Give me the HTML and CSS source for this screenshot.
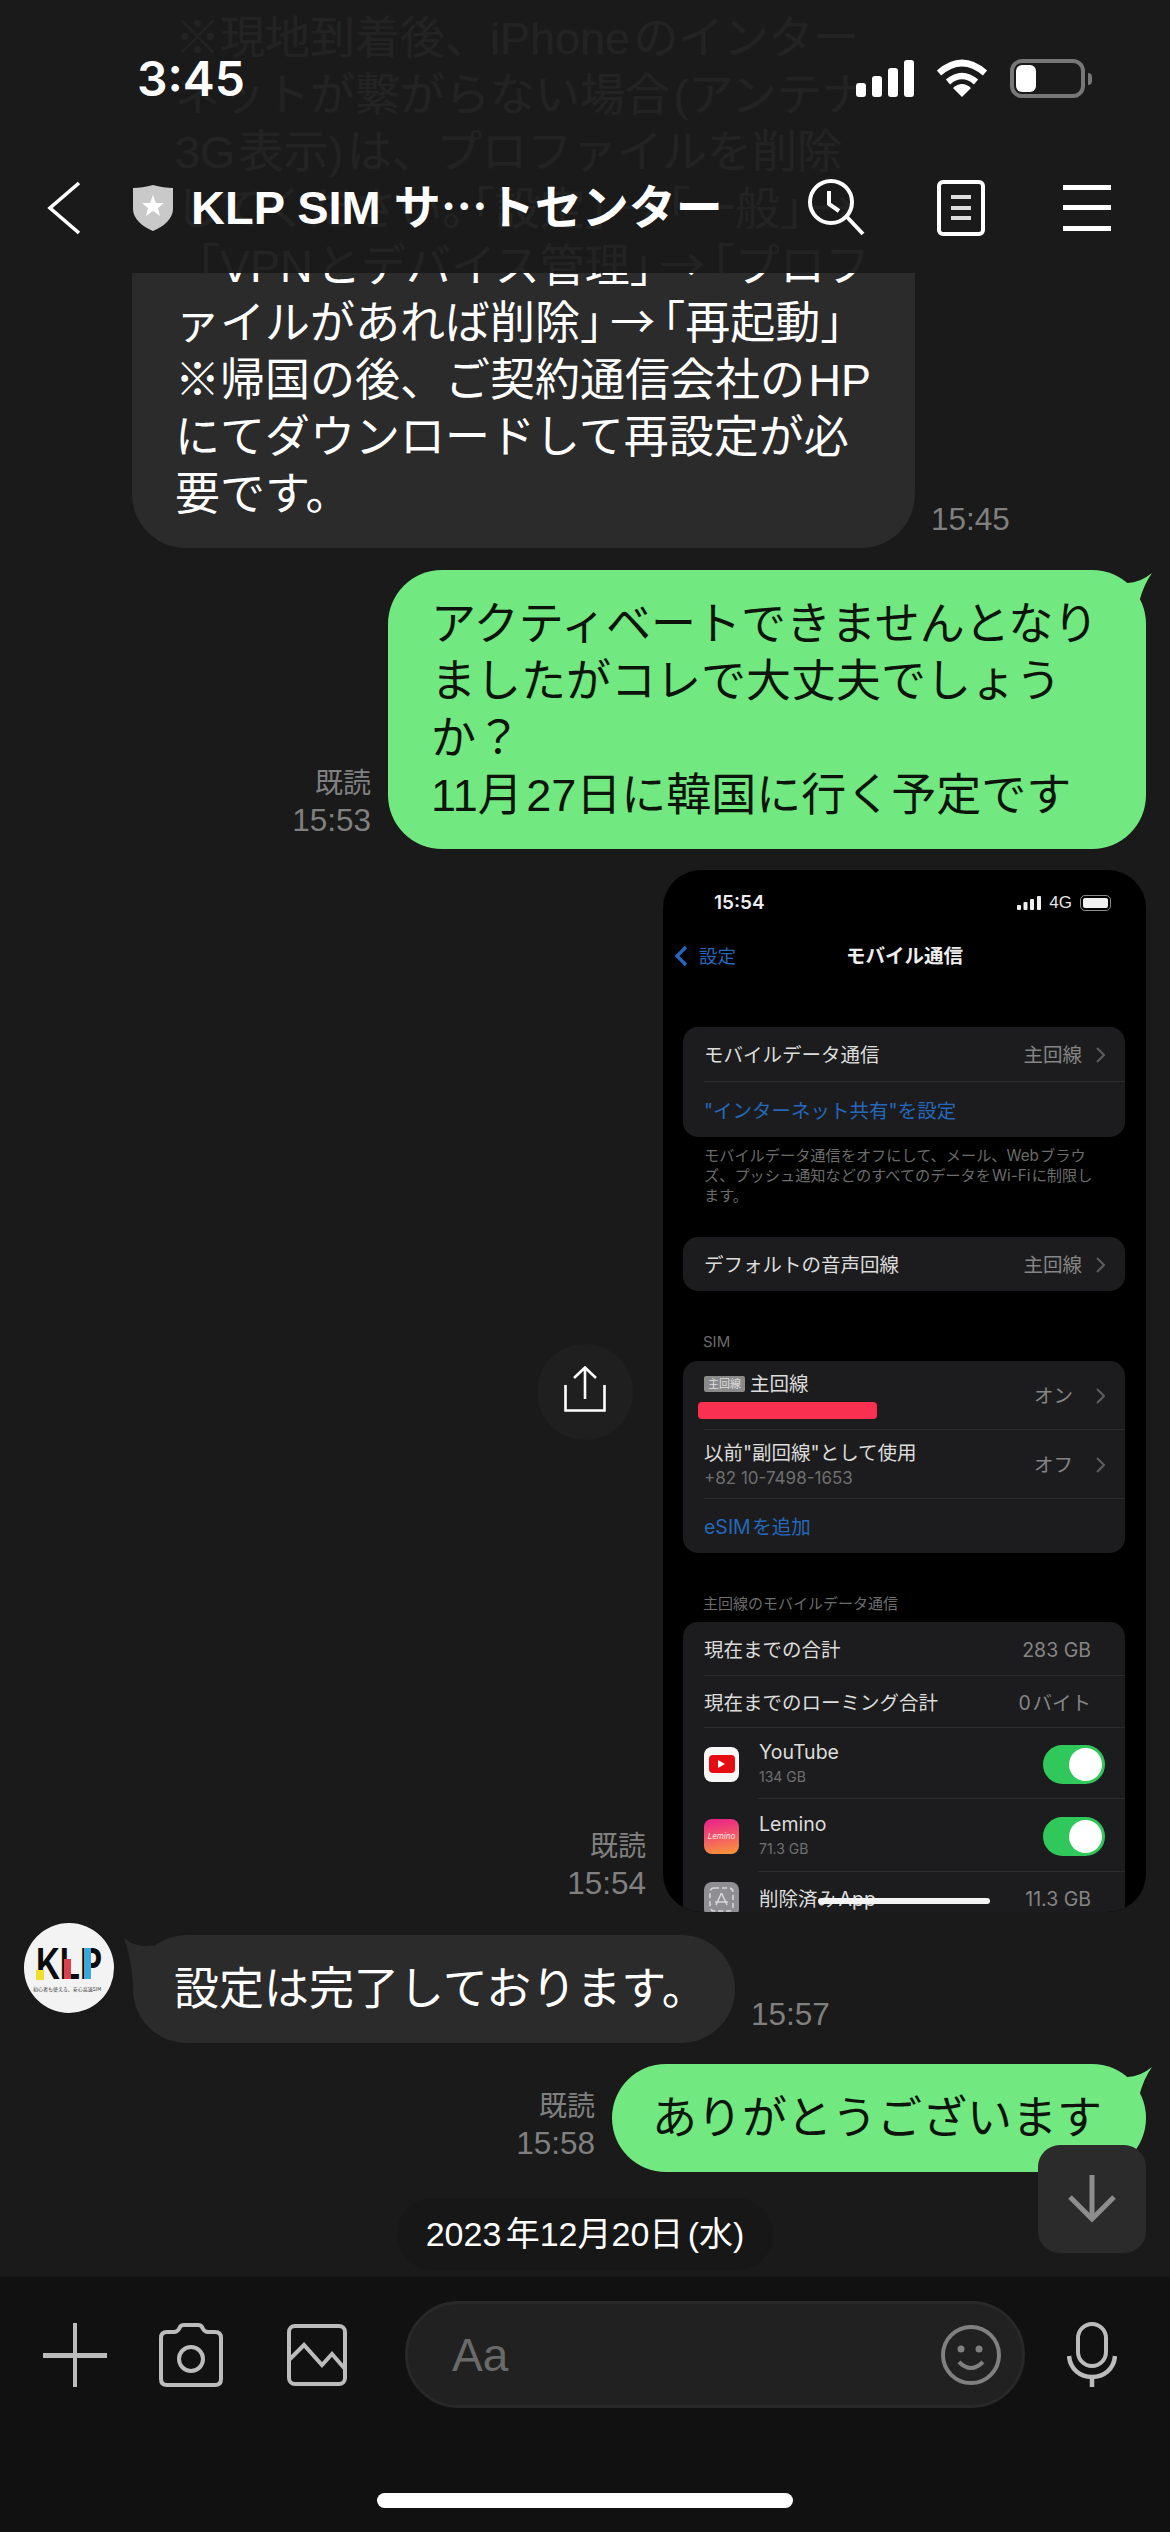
FILE: index.html
```html
<!DOCTYPE html>
<html lang="ja">
<head>
    <meta charset="utf-8">
    <title>KLP SIM サポートセンター</title>
    <link rel="stylesheet" href="styles.css">
</head>
<body>
    <div class="app">
        <header class="header">
            <div class="status">
                <span class="clock">3:45</span>
                <div class="status-icons">
                    <svg width="58" height="37" viewBox="0 0 58 37" fill="#fff">
                        <rect x="0" y="23" width="10" height="14" rx="3"/>
                        <rect x="16" y="16" width="10" height="21" rx="3"/>
                        <rect x="32" y="8" width="10" height="29" rx="3"/>
                        <rect x="48" y="0" width="10" height="37" rx="3"/>
                    </svg>
                    <svg width="52" height="38" viewBox="0 0 52 38">
                        <path d="M3 14Q26 -6 49 14" fill="none" stroke="#fff" stroke-width="6.5"/>
                        <path d="M12 23Q26 11 40 23" fill="none" stroke="#fff" stroke-width="6.5"/>
                        <path d="M26 38L17 29Q26 21 35 29Z" fill="#fff"/>
                    </svg>
                    <div class="battery"><div class="battery-fill"></div></div>
                </div>
            </div>
            <nav class="nav">
                <svg class="nav-back" width="36" height="56" viewBox="0 0 36 56">
                    <path d="M32 3L3 28L32 53" fill="none" stroke="#fff" stroke-width="3.6"/>
                </svg>
                <svg class="nav-shield" width="40" height="46" viewBox="0 0 40 46">
                    <path d="M20 0C27 2 34 3 40 3V24C40 34 30 42 20 46C10 42 0 34 0 24V3C6 3 13 2 20 0Z" fill="#c9c9c9"/>
                    <path d="M20 10L23 18L31 18L25 23L27 31L20 26L13 31L15 23L9 18L17 18Z" fill="#fff"/>
                </svg>
                <h1 class="title">KLP SIM サ<span class="dots">…</span>トセンター</h1>
                <div class="nav-icons">
                    <svg width="60" height="60" viewBox="0 0 60 60" fill="none" stroke="#fff" stroke-width="4">
                        <circle cx="25" cy="24" r="21"/>
                        <path d="M41 39L57 56"/>
                        <path d="M23 13V26L33 33"/>
                    </svg>
                    <svg width="48" height="56" viewBox="0 0 48 56" fill="none" stroke="#fff" stroke-width="4">
                        <rect x="2" y="2" width="44" height="52" rx="4"/>
                        <path d="M14 17H34M14 28H34M14 38H34" stroke="#ddd"/>
                    </svg>
                    <svg class="nav-menu" width="48" height="46" viewBox="0 0 48 46" fill="#fff">
                        <rect y="0" width="48" height="5"/>
                        <rect y="20" width="48" height="5"/>
                        <rect y="41" width="48" height="5"/>
                    </svg>
                </div>
            </nav>
        </header>

        <main class="chat">
            <div class="row row-in row-top">
                <div class="bubble bubble-in bubble-w783">※現地到着後、iPhone のインター<br>ネットが繋がらない場合 (アンテナ<br>3G 表示) は、プロファイルを削除<br>してください<span class="squeeze">。</span>「設定<span class="squeeze">」→</span>「一般<span class="squeeze">」→</span><br>「VPN とデバイス管理<span class="squeeze">」→</span>「プロフ<br>ァイルがあれば削除<span class="squeeze">」→</span>「再起動」<br>※帰国の後、ご契約通信会社の HP<br>にてダウンロードして再設定が必<br>要です。</div>
                <div class="meta meta-in"><span class="meta-time">15:45</span></div>
            </div>

            <div class="row row-me">
                <div class="meta meta-me"><span>既読</span><span class="meta-time">15:53</span></div>
                <div class="bubble bubble-me bubble-w758 has-tail">アクティベートできませんとなり<br>ましたがコレで大丈夫でしょう<br>か？<br>11月 27日に韓国に行く予定です</div>
            </div>

            <div class="row row-me row-stretch row-shot">
                <div class="side">
                    <div class="share">
                        <svg class="share-icon" width="42" height="46" viewBox="0 0 42 46" fill="none" stroke="#fff" stroke-width="2.6">
                            <path d="M1.5 19V44.5H40.5V19"/>
                            <path d="M21 33V2M10 12L21 1.5L32 12"/>
                        </svg>
                    </div>
                    <div class="meta meta-me"><span>既読</span><span class="meta-time">15:54</span></div>
                </div>

                <div class="shot">
                    <div class="shot-status">
                        <span class="shot-clock">15:54</span>
                        <div class="shot-status-icons">
                            <svg width="24" height="14" viewBox="0 0 24 14" fill="#eee">
                                <rect x="0" y="9" width="4" height="5" rx="1"/>
                                <rect x="6.5" y="6" width="4" height="8" rx="1"/>
                                <rect x="13" y="3" width="4" height="11" rx="1"/>
                                <rect x="20" y="0" width="4" height="14" rx="1"/>
                            </svg>
                            <span class="shot-net">4G</span>
                            <div class="shot-battery"><div class="shot-battery-fill"></div></div>
                        </div>
                    </div>
                    <div class="shot-nav">
                        <svg class="shot-back" width="14" height="22" viewBox="0 0 14 22">
                            <path d="M12 2L3 11L12 20" fill="none" stroke="#2568bb" stroke-width="3.4"/>
                        </svg>
                        <span class="shot-back-label">設定</span>
                        <span class="shot-title">モバイル通信</span>
                    </div>

                    <div class="card card-first">
                        <div class="cell cell-54">
                            <span>モバイルデータ通信</span>
                            <span class="value">主回線<svg class="chev" width="9" height="16" viewBox="0 0 9 16"><path d="M1 1L8 8L1 15" fill="none" stroke="#5e5e60" stroke-width="2"/></svg></span>
                        </div>
                        <div class="rule"></div>
                        <div class="cell cell-55"><span class="link">"インターネット共有"を設定</span></div>
                    </div>
                    <p class="note">モバイルデータ通信をオフにして、メール、Web ブラウ<br>ズ、プッシュ通知などのすべてのデータを Wi-Fi に制限し<br>ます。</p>

                    <div class="card card-voice">
                        <div class="cell cell-54">
                            <span>デフォルトの音声回線</span>
                            <span class="value">主回線<svg class="chev" width="9" height="16" viewBox="0 0 9 16"><path d="M1 1L8 8L1 15" fill="none" stroke="#5e5e60" stroke-width="2"/></svg></span>
                        </div>
                    </div>

                    <div class="label label-sim">SIM</div>
                    <div class="card card-sim">
                        <div class="cell cell-68">
                            <div class="stack stack-wide">
                                <div class="line-name"><span class="badge">主回線</span>主回線</div>
                                <div class="redact"></div>
                            </div>
                            <span class="value">オン<svg class="chev chev-wide" width="9" height="16" viewBox="0 0 9 16"><path d="M1 1L8 8L1 15" fill="none" stroke="#5e5e60" stroke-width="2"/></svg></span>
                        </div>
                        <div class="rule"></div>
                        <div class="cell cell-68">
                            <div class="stack">
                                <div class="line-name">以前"副回線"として使用</div>
                                <div class="sub sub-phone">+82 10-7498-1653</div>
                            </div>
                            <span class="value">オフ<svg class="chev chev-wide" width="9" height="16" viewBox="0 0 9 16"><path d="M1 1L8 8L1 15" fill="none" stroke="#5e5e60" stroke-width="2"/></svg></span>
                        </div>
                        <div class="rule"></div>
                        <div class="cell cell-54"><span class="link">eSIM を追加</span></div>
                    </div>

                    <div class="label label-data">主回線のモバイルデータ通信</div>
                    <div class="card card-data">
                        <div class="cell cell-53 cell-plain"><span>現在までの合計</span><span class="value">283 GB</span></div>
                        <div class="rule"></div>
                        <div class="cell cell-51 cell-plain"><span>現在までのローミング合計</span><span class="value value-tight">0 バイト</span></div>
                        <div class="rule"></div>
                        <div class="cell cell-70">
                            <div class="app-icon icon-youtube"><div class="yt-red"><div class="yt-play"></div></div></div>
                            <div class="stack">
                                <div class="line-name">YouTube</div>
                                <div class="sub">134 GB</div>
                            </div>
                            <div class="toggle"><div class="knob"></div></div>
                        </div>
                        <div class="rule rule-indent"></div>
                        <div class="cell cell-72">
                            <div class="app-icon icon-lemino"><span class="lemino-mark">Lemino</span></div>
                            <div class="stack">
                                <div class="line-name">Lemino</div>
                                <div class="sub">71.3 GB</div>
                            </div>
                            <div class="toggle"><div class="knob"></div></div>
                        </div>
                        <div class="rule rule-indent"></div>
                        <div class="cell cell-52 cell-plain">
                            <div class="app-icon icon-deleted">
                                <svg width="35" height="35" viewBox="0 0 35 35" fill="none" stroke="#d6d6d8" stroke-width="1.6">
                                    <rect x="6" y="6" width="23" height="23" rx="4" stroke-dasharray="5 3"/>
                                    <path d="M17.5 11L12 23M17.5 11L23 23M11 20H24"/>
                                </svg>
                            </div>
                            <span class="deleted-name">削除済み App</span>
                            <span class="value">11.3 GB</span>
                        </div>
                    </div>
                    <div class="shot-home"></div>
                </div>
            </div>

            <div class="row row-avatar">
                <div class="avatar">
                    <svg width="90" height="90" viewBox="0 0 90 90">
                        <circle cx="45" cy="45" r="45" fill="#f3f3f3"/>
                        <text transform="translate(12 56) scale(.75 1)" class="logo-text">KLP</text>
                        <rect x="12" y="47" width="8" height="10" fill="#f2df2c"/>
                        <rect x="40" y="36" width="7" height="20" fill="#d8414e"/>
                        <rect x="60" y="25" width="7" height="31" fill="#3aa8de"/>
                        <text x="9" y="68" class="logo-tag">初心者も使える、安心高速SIM</text>
                    </svg>
                </div>
                <div class="bubble bubble-in bubble-w602 has-tail">設定は完了しております。</div>
                <div class="meta meta-in"><span class="meta-time">15:57</span></div>
            </div>

            <div class="row row-me">
                <div class="meta meta-me"><span>既読</span><span class="meta-time">15:58</span></div>
                <div class="bubble bubble-me bubble-w534 has-tail">ありがとうございます</div>
            </div>

            <div class="date-wrap"><div class="date">2023 年12月20日 (水)</div></div>

            <div class="to-bottom">
                <svg width="50" height="50" viewBox="0 0 50 50" fill="none" stroke="#8d8d8d" stroke-width="5">
                    <path d="M25 1V44"/>
                    <path d="M3 23L25 45L47 23"/>
                </svg>
            </div>
        </main>

        <footer class="composer">
            <div class="composer-row">
                <svg class="tool-plus" width="64" height="64" viewBox="0 0 64 64" fill="#bcbcbc">
                    <rect x="30" y="0" width="4" height="64"/>
                    <rect x="0" y="30" width="64" height="5"/>
                </svg>
                <svg class="tool-camera" width="64" height="64" viewBox="0 0 64 64" fill="none" stroke="#bcbcbc" stroke-width="4">
                    <path d="M8 9H15Q18 9 20 6L21 4Q22 2 25 2H39Q42 2 43 4L44 6Q46 9 49 9H56Q62 9 62 15V56Q62 62 56 62H8Q2 62 2 56V15Q2 9 8 9Z"/>
                    <circle cx="32" cy="36" r="12"/>
                </svg>
                <svg class="tool-image" width="60" height="62" viewBox="0 0 60 62" fill="none" stroke="#bcbcbc" stroke-width="4">
                    <rect x="2" y="2" width="56" height="58" rx="6"/>
                    <path d="M2 36L17 21L35 41L45 30L58 45"/>
                </svg>
                <div class="input">
                    <span class="input-hint">Aa</span>
                    <svg class="input-smile" width="60" height="60" viewBox="0 0 60 60" fill="none" stroke="#808080" stroke-width="4">
                        <circle cx="30" cy="30" r="28"/>
                        <circle cx="20" cy="24" r="3.5" fill="#808080" stroke="none"/>
                        <circle cx="38" cy="24" r="3.5" fill="#808080" stroke="none"/>
                        <path d="M18 37Q30 49 42 37"/>
                    </svg>
                </div>
                <svg class="tool-mic" width="50" height="65" viewBox="0 0 50 65" fill="none" stroke="#bcbcbc" stroke-width="4">
                    <rect x="11" y="2" width="28" height="42" rx="14"/>
                    <path d="M2 34C3 47 13 55 25 55C37 55 47 47 48 34" stroke-width="4.5"/>
                    <path d="M25 55V65" stroke-width="4.5"/>
                </svg>
            </div>
            <div class="home-bar"></div>
        </footer>
    </div>
</body>
</html>
```

FILE: styles.css
```css
body {
    margin: 0;
    background: #1a1a1a;
    font-family: "Liberation Sans", "Noto Sans CJK JP", sans-serif;
    text-autospace: no-autospace;
}

.app {
    position: relative;
    display: flex;
    flex-direction: column;
    width: 1170px;
    height: 2532px;
    overflow: hidden;
}

/* top bar sits over the scrolled messages */
.header {
    position: absolute;
    top: 0;
    left: 0;
    right: 0;
    z-index: 5;
    height: 273px;
    background: rgba(26, 26, 26, 0.96);
}

.status {
    display: flex;
    justify-content: space-between;
    align-items: center;
    height: 156px;
    padding: 0 85px 0 137px;
}

.clock {
    font-family: Inter, sans-serif;
    font-size: 48px;
    font-weight: 600;
    color: #fff;
}

.status-icons {
    display: flex;
    align-items: center;
    gap: 22px;
}

.battery {
    position: relative;
    box-sizing: border-box;
    width: 75px;
    height: 39px;
    padding: 2px;
    border: 4px solid #777;
    border-radius: 12px;
}

.battery::after {
    content: "";
    position: absolute;
    top: 10px;
    right: -11px;
    width: 4px;
    height: 12px;
    border-radius: 0 6px 6px 0;
    background: #777;
}

.battery-fill {
    width: 20px;
    height: 100%;
    border-radius: 6px;
    background: #fff;
}

.nav {
    display: flex;
    align-items: center;
    height: 104px;
    padding: 0 59px 0 47px;
}

.nav-shield {
    margin-left: 50px;
}

.title {
    margin: 0 0 0 18px;
    font-size: 47px;
    line-height: 54px;
    font-weight: 700;
    color: #fff;
    white-space: nowrap;
}

.dots {
    font-family: "Noto Sans CJK JP", sans-serif;
    line-height: 0;
}

.nav-icons {
    display: flex;
    align-items: center;
    gap: 71px;
    margin-left: auto;
}

.nav-menu {
    margin-left: 7px;
}

.chat {
    position: relative;
    display: flex;
    flex-direction: column;
    gap: 21px;
    flex: none;
    height: 2277px;
    overflow: hidden;
}

.chat > * {
    flex-shrink: 0;
}

.row {
    display: flex;
    align-items: flex-end;
}

.row-in {
    padding-left: 132px;
}

.row-top {
    margin-top: -16px;
    margin-bottom: 1px;
}

.row-me {
    justify-content: flex-end;
    padding-right: 24px;
}

.row-stretch {
    align-items: stretch;
}

.row-shot {
    margin-bottom: 2px;
}

.row-avatar {
    padding-left: 24px;
}

.avatar {
    align-self: flex-start;
    width: 90px;
    height: 90px;
    margin: -12px 19px 0 0;
}

.logo-text {
    font-family: "Liberation Sans", sans-serif;
    font-size: 44px;
    font-weight: 700;
    fill: #0b0b0b;
}

.logo-tag {
    font-family: "Noto Sans CJK JP", sans-serif;
    font-size: 5px;
    fill: #333;
}

.bubble {
    position: relative;
    box-sizing: border-box;
    padding: 25.5px 43px;
    border-radius: 54px;
    font-size: 45px;
    line-height: 57px;
    word-spacing: -0.2em;
    white-space: nowrap;
}

/* closes up the wide punctuation around the arrows */
.squeeze {
    font-family: "Noto Sans CJK JP", sans-serif;
    line-height: 0;
    letter-spacing: -0.33em;
}

.bubble-in {
    background: #2b2b2b;
    color: #fff;
}

.bubble-me {
    background: #71e880;
    color: #0c140c;
}

.bubble-w783 {
    width: 783px;
}

.bubble-w758 {
    width: 758px;
}

.bubble-w602 {
    width: 602px;
    padding-left: 41px;
}

.bubble-w534 {
    width: 534px;
    padding-left: 40px;
}

.bubble-me.has-tail::after {
    content: "";
    position: absolute;
    top: -6px;
    right: -10px;
    width: 44px;
    height: 44px;
    background: #71e880;
    clip-path: path("M8 18Q24 22 40 9Q32 20 27 38L0 38Z");
}

.bubble-in.has-tail::before {
    content: "";
    position: absolute;
    top: 2px;
    left: -10px;
    width: 40px;
    height: 50px;
    background: #2b2b2b;
    clip-path: path("M1 1Q14 12 30 8L30 46L10 46Q8 20 1 1Z");
}

.meta {
    display: flex;
    flex-direction: column;
    margin-bottom: 10px;
    font-size: 28px;
    line-height: 36px;
    color: #808080;
}

.meta-time {
    font-size: 31.5px;
    line-height: 37px;
}

.meta-in {
    margin-left: 16px;
}

.meta-me {
    align-items: flex-end;
    margin-right: 17px;
}

.side {
    display: flex;
    flex-direction: column;
    align-items: flex-end;
}

.side .meta {
    margin-top: auto;
}

.share {
    display: flex;
    justify-content: center;
    align-items: center;
    width: 96px;
    height: 96px;
    margin: 474px 30px 0 0;
    border-radius: 50%;
    background: #1f1f1f;
}

.share-icon {
    margin-bottom: 6px;
}

/* attached photo of the phone settings page */
.shot {
    position: relative;
    box-sizing: border-box;
    width: 483px;
    height: 1042px;
    padding: 0 21px 0 20px;
    overflow: hidden;
    border-radius: 38px;
    background: #000;
    font-family: Inter, "Noto Sans CJK JP", sans-serif;
    font-size: 19.5px;
    line-height: 22px;
    color: #dcdcdc;
}

.shot-status {
    display: flex;
    justify-content: space-between;
    align-items: center;
    height: 66px;
    padding: 0 14px 0 31px;
    box-sizing: border-box;
}

.shot-clock {
    font-size: 19px;
    font-weight: 600;
    color: #eee;
}

.shot-status-icons {
    display: flex;
    align-items: center;
    gap: 8px;
}

.shot-net {
    font-family: "Liberation Sans", sans-serif;
    font-size: 17px;
    color: #e6e6e6;
}

.shot-battery {
    box-sizing: border-box;
    width: 31px;
    height: 16px;
    padding: 2px;
    border: 1px solid #8a8a8a;
    border-radius: 5px;
}

.shot-battery-fill {
    height: 100%;
    border-radius: 2px;
    background: #f2f2f2;
}

.shot-nav {
    position: relative;
    display: flex;
    align-items: center;
    gap: 11px;
    height: 40px;
    margin-left: -9px;
}

.shot-back-label {
    font-size: 18.5px;
    color: #2568bb;
}

.shot-title {
    position: absolute;
    left: 172px;
    font-weight: 700;
    font-size: 19.5px;
    color: #eee;
}

.card {
    border-radius: 15px;
    background: #1c1c1e;
}

.card-first {
    margin-top: 51px;
}

.card-voice {
    margin-top: 31px;
}

.card-sim {
    margin-top: 9px;
}

.card-data {
    margin-top: 8px;
}

.cell {
    display: flex;
    justify-content: space-between;
    align-items: center;
    box-sizing: border-box;
    padding: 2px 20px 0 21px;
    white-space: nowrap;
}

.cell-plain {
    padding-right: 34px;
}

.cell-51 { height: 51px; }
.cell-52 { height: 52px; }
.cell-53 { height: 53px; }
.cell-54 { height: 54px; }
.cell-55 { height: 55px; }
.cell-68 { height: 68px; }
.cell-70 { height: 70px; }
.cell-72 { height: 72px; }

.rule {
    height: 1px;
    margin-left: 21px;
    background: #2c2c2e;
}

.rule-indent {
    margin-left: 75px;
}

.value {
    display: flex;
    align-items: center;
    color: #858585;
}

.value-tight {
    word-spacing: -0.2em;
}

.chev {
    margin-left: 14px;
}

.chev-wide {
    margin-left: 23px;
}

.link {
    color: #2568bb;
    word-spacing: -0.2em;
}

.note {
    margin: 9px 0 0;
    padding-left: 21px;
    font-size: 15.2px;
    line-height: 20px;
    color: #6c6c6c;
    word-spacing: -0.2em;
    white-space: nowrap;
}

.label {
    padding-left: 20px;
    font-size: 15px;
    line-height: 20px;
    color: #6c6c6c;
}

.label-sim {
    margin-top: 41px;
}

.label-data {
    margin-top: 41px;
}

.stack {
    display: flex;
    flex: 1;
    flex-direction: column;
    gap: 3px;
}

.stack-wide {
    gap: 7px;
}

.line-name {
    display: flex;
    align-items: center;
    color: #dcdcdc;
}

.badge {
    width: 41px;
    height: 16px;
    margin-right: 5px;
    border-radius: 2px;
    background: #8a8a8a;
    font-size: 11px;
    line-height: 16px;
    text-align: center;
    color: #ddd;
}

.redact {
    width: 179px;
    height: 17px;
    margin-left: -6px;
    border-radius: 4px;
    background: #f9304f;
}

.sub {
    font-size: 14px;
    color: #6f6f6f;
}

.sub-phone {
    font-size: 17px;
}

.app-icon {
    display: flex;
    flex: none;
    justify-content: center;
    align-items: center;
    width: 35px;
    height: 35px;
    margin-right: 20px;
    border-radius: 8px;
}

.icon-youtube {
    background: #f7f7f7;
}

.yt-red {
    display: flex;
    justify-content: center;
    align-items: center;
    width: 26px;
    height: 18px;
    border-radius: 4px;
    background: #e60d12;
}

.yt-play {
    width: 0;
    height: 0;
    border-top: 4px solid transparent;
    border-bottom: 4px solid transparent;
    border-left: 7px solid #fff;
}

.icon-lemino {
    background: linear-gradient(170deg, #ec2a86 10%, #f2586a 50%, #f99a33 100%);
}

.lemino-mark {
    font-size: 8px;
    font-style: italic;
    color: #ffe3e3;
}

.icon-deleted {
    background: #8e8e93;
}

.deleted-name {
    flex: 1;
    color: #dcdcdc;
    word-spacing: -0.2em;
}

.toggle {
    display: flex;
    flex: none;
    justify-content: flex-end;
    align-items: center;
    box-sizing: border-box;
    width: 62px;
    height: 39px;
    padding-right: 3px;
    border-radius: 20px;
    background: #30c85a;
}

.knob {
    width: 33px;
    height: 33px;
    border-radius: 50%;
    background: #fff;
}

.shot-home {
    position: absolute;
    left: 155px;
    bottom: 8px;
    width: 172px;
    height: 6px;
    border-radius: 3px;
    background: #f4f4f4;
}

.date-wrap {
    display: flex;
    justify-content: center;
    margin-top: 5px;
}

.date {
    padding: 0 29px;
    border-radius: 36px;
    background: #171717;
    font-size: 34px;
    line-height: 72px;
    word-spacing: -0.15em;
    color: #fff;
}

.to-bottom {
    position: absolute;
    right: 24px;
    bottom: 24px;
    display: flex;
    justify-content: center;
    align-items: center;
    width: 108px;
    height: 108px;
    border-radius: 22px;
    background: #2b2b2b;
}

.composer {
    flex: 1;
    background: #111;
}

.composer-row {
    display: flex;
    align-items: center;
    padding: 24px 0 0 43px;
}

.tool-camera {
    margin-left: 52px;
}

.tool-image {
    margin-left: 64px;
}

.input {
    display: flex;
    justify-content: space-between;
    align-items: center;
    box-sizing: border-box;
    width: 620px;
    height: 107px;
    margin-left: 58px;
    padding: 0 21px 0 44px;
    border: 3px solid #282828;
    border-radius: 54px;
    background: #212121;
}

.input-hint {
    font-size: 46px;
    color: #6a6a6a;
}

.tool-mic {
    margin-left: 42px;
}

.home-bar {
    width: 416px;
    height: 15px;
    margin: 85px auto 0;
    border-radius: 8px;
    background: #fff;
}
```
